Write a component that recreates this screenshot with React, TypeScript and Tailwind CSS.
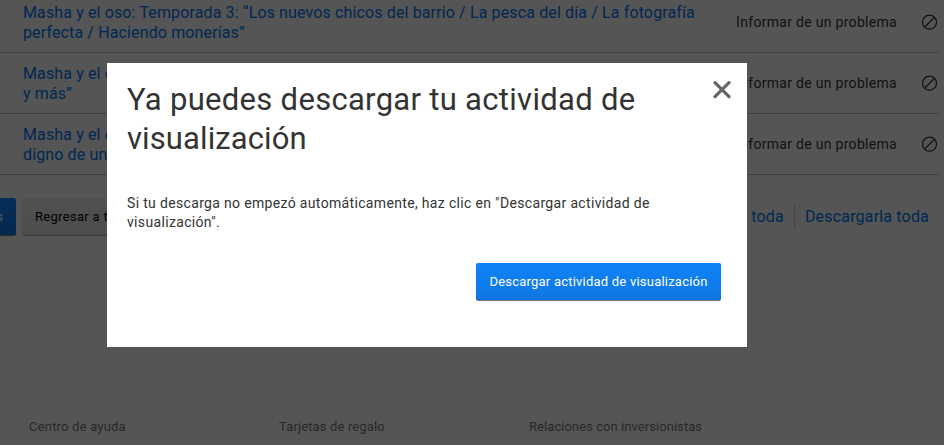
import React from "react";

const rows: string[][] = [
  [
    "Masha y el oso: Temporada 3: “Los nuevos chicos del barrio / La pesca del día / La fotografía",
    "perfecta / Haciendo monerías”",
  ],
  ["Masha y el oso", "y más”"],
  ["Masha y el oso", "digno de un"],
];

function HideIcon() {
  return (
    <svg viewBox="0 0 16 16" className="ml-[24px] size-4 shrink-0" fill="none" stroke="currentColor" strokeWidth="1.25">
      <circle cx="8.5" cy="8.2" r="7" />
      <path d="M4 12.7 13 3.7" />
    </svg>
  );
}

function ActivityRow({ lines }: { lines: string[] }) {
  return (
    <li className="flex h-[61px] items-center border-b border-[#b8b8b8] pl-[23px] pr-[2px]">
      <a className="grow pt-px whitespace-nowrap text-[16px] leading-5 tracking-[0.13px] text-[#0071eb]">
        {lines.map((line) => (
          <span key={line} className="block">{line}</span>
        ))}
      </a>
      <span className="whitespace-nowrap text-[14px] tracking-[0.3px]">Informar de un problema</span>
      <HideIcon />
    </li>
  );
}

export default function App() {
  return (
    <div className="relative h-[445px] w-[944px] overflow-hidden bg-[#f3f3f3] font-['Roboto',sans-serif] text-[#333]">
      <ul className="-mt-2 w-[939px]">
        {rows.map((lines) => (
          <ActivityRow key={lines[1]} lines={lines} />
        ))}
      </ul>

      <div className="mt-[23px] flex h-[38px] items-center">
        <button className="flex h-[38px] w-4 items-center justify-end overflow-hidden rounded-r-[2px] border-b border-[#777] bg-linear-to-b from-[#0f83f8] to-[#0f76e2] pr-[13px] text-[13px] whitespace-nowrap text-white">
          Mostrar más
        </button>
        <button className="ml-1.5 h-[38px] rounded-[2px] border-b border-[#aaa] bg-linear-to-b from-[#e6e6e6] to-[#dddddd] px-[13px] text-[13px] tracking-[0.3px] whitespace-nowrap text-black">
          Regresar a tu
        </button>
        <div className="mr-[15px] ml-auto flex h-5 items-center whitespace-nowrap text-[16px] tracking-[0.18px] text-[#0071eb]">
          <a className="pr-[10px]">Ocultar toda</a>
          <a className="border-l border-[#c4c4c4] pl-[10px]">Descargarla toda</a>
        </div>
      </div>

      <footer className="mt-[101px] border-t border-[#e4e4e4] pt-[79px] pl-[29px] text-[13px] leading-5 text-[#737373]">
        <div className="grid grid-cols-[250px_250px_250px] tracking-[0.2px]">
          <a>Centro de ayuda</a>
          <a className="tracking-[0.14px]">Tarjetas de regalo</a>
          <a className="tracking-[0.06px]">Relaciones con inversionistas</a>
        </div>
      </footer>

      <div className="absolute inset-0 bg-black/65 pt-[63px] pl-[107px]">
        <section className="relative flex h-[284px] w-[640px] flex-col bg-white pt-[17px] pr-[26px] pl-5">
          <h1 className="text-[31px] leading-[39px] tracking-[0.3px] whitespace-nowrap">
            Ya puedes descargar tu actividad de
            <br />
            <span className="tracking-[0.1px]">visualización</span>
          </h1>
          <p className="mt-[36px] text-[14px] leading-[19px] tracking-[0.335px] whitespace-nowrap">
            Si tu descarga no empezó automáticamente, haz clic en "Descargar actividad de
            <br />
            visualización".
          </p>
          <button className="mt-[31px] h-[38px] w-[245px] self-end rounded-[2px] border-b border-[#777] bg-linear-to-b from-[#0f83f8] to-[#0f76e2] text-[13px] tracking-[0.22px] whitespace-nowrap text-white">
            Descargar actividad de visualización
          </button>
          <button aria-label="Cerrar" className="absolute top-[18px] right-[16px] text-[#666]">
            <svg viewBox="0 0 18 18" className="size-[18px]" fill="none" stroke="currentColor" strokeWidth="3.2" strokeLinecap="round">
              <path d="M2 1.7 16 15.7M16 1.7 2 15.7" />
            </svg>
          </button>
        </section>
      </div>
    </div>
  );
}
